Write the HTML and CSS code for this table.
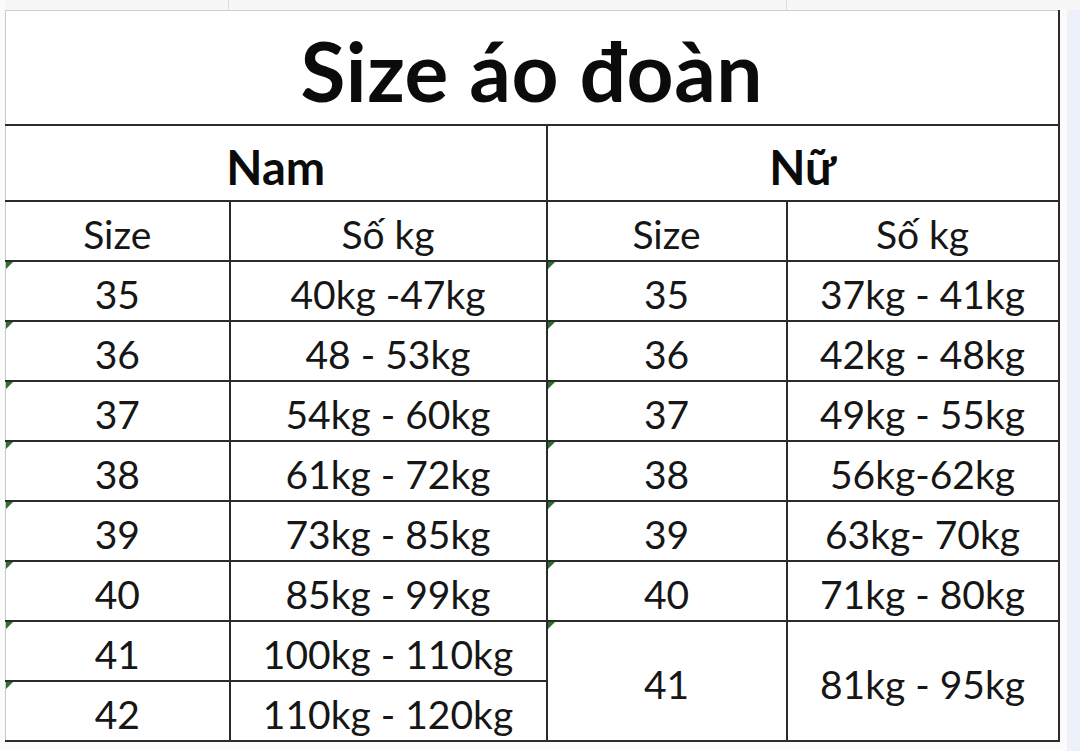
FILE: index.html
```html
<!DOCTYPE html>
<html lang="vi">
<head>
<meta charset="utf-8">
<title>Size áo đoàn</title>
<link rel="stylesheet" href="styles.css">
</head>
<body>
<div class="sheet">
  <div class="topstrip">
    <span class="grid-tick t1"></span>
    <span class="grid-tick t2"></span>
  </div>
  <table class="size-table">
    <colgroup>
      <col class="c1"><col class="c2"><col class="c3"><col class="c4">
    </colgroup>
    <tr class="r-title"><td colspan="4" class="title">Size áo đoàn</td></tr>
    <tr class="r-group"><td colspan="2" class="group">Nam</td><td colspan="2" class="group">Nữ</td></tr>
    <tr class="r-row"><td>Size</td><td>Số kg</td><td>Size</td><td>Số kg</td></tr>
    <tr class="r-row"><td class="flag">35</td><td>40kg -47kg</td><td class="flag">35</td><td>37kg - 41kg</td></tr>
    <tr class="r-row"><td class="flag">36</td><td>48 - 53kg</td><td class="flag">36</td><td>42kg - 48kg</td></tr>
    <tr class="r-row"><td class="flag">37</td><td>54kg - 60kg</td><td class="flag">37</td><td>49kg - 55kg</td></tr>
    <tr class="r-row"><td class="flag">38</td><td>61kg - 72kg</td><td class="flag">38</td><td>56kg-62kg</td></tr>
    <tr class="r-row"><td class="flag">39</td><td>73kg - 85kg</td><td class="flag">39</td><td>63kg- 70kg</td></tr>
    <tr class="r-row"><td class="flag">40</td><td>85kg - 99kg</td><td class="flag">40</td><td>71kg - 80kg</td></tr>
    <tr class="r-row"><td class="flag">41</td><td>100kg - 110kg</td><td class="flag merged" rowspan="2">41</td><td class="merged" rowspan="2">81kg - 95kg</td></tr>
    <tr class="r-row"><td class="flag">42</td><td>110kg - 120kg</td></tr>
  </table>
</div>
</body>
</html>
```

FILE: styles.css
```css
* { box-sizing: border-box; }

html, body {
  margin: 0;
  padding: 0;
  width: 1080px;
  height: 751px;
  overflow: hidden;
  background: #eef1f9;
}

.sheet {
  width: 1080px;
  height: 751px;
  background: linear-gradient(to right, #fbfbfc 0, #fbfbfc 1067px, #eef1f9 1067px);
  padding-left: 5px;
  font-family: Lato, "Noto Sans", sans-serif;
  color: #111;
}

.topstrip {
  position: relative;
  height: 10px;
  background: #f7f7f8;
}

.grid-tick {
  position: absolute;
  top: 0;
  width: 1px;
  height: 10px;
  background: #dcdcdc;
}
.t1 { left: 223px; }
.t2 { left: 781px; }

.size-table {
  border-collapse: collapse;
  table-layout: fixed;
  width: 1053px;
  background: #fff;
}

.c1 { width: 224px; }
.c2 { width: 317px; }
.c3 { width: 240px; }
.c4 { width: 272px; }

.size-table td {
  position: relative;
  border: 2px solid #2b2b2b;
  padding: 6px 0 0 0;
  text-align: center;
  vertical-align: middle;
  font-size: 39px;
  line-height: 40px;
  font-weight: 400;
  color: #161616;
  white-space: nowrap;
}

.size-table tr td:first-child { border-left: 1px solid #c9c9c9; }

.r-title { height: 114px; }
.r-group { height: 76px; }
.r-row { height: 60px; }

.title {
  border-top: 1px solid #cfcfcf !important;
  font-size: 82px !important;
  line-height: 80px !important;
  font-weight: 700 !important;
  color: #0b0b0b !important;
  letter-spacing: 0.5px;
  padding-top: 6px !important;
}

.group {
  font-size: 47px !important;
  line-height: 47px !important;
  font-weight: 700 !important;
  color: #0b0b0b !important;
  padding-top: 10px !important;
}

.flag::before {
  content: "";
  position: absolute;
  left: 0;
  top: 0;
  width: 0;
  height: 0;
  border-top: 7px solid #2e6e2e;
  border-right: 7px solid transparent;
}
```
